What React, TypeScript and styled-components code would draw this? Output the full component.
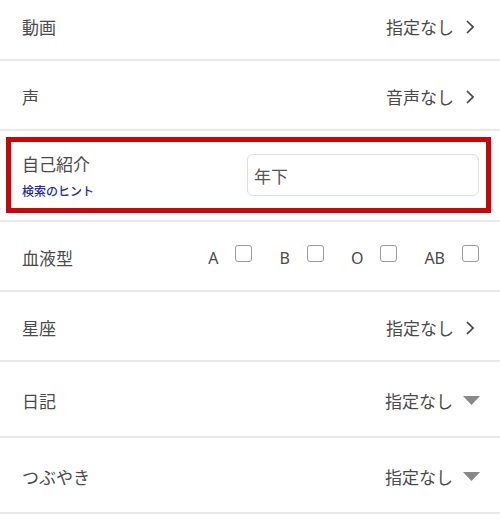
import styled, { createGlobalStyle } from "styled-components";

const GlobalStyle = createGlobalStyle`
  html, body {
    margin: 0;
    padding: 0;
    background: #fff;
  }
  body {
    font-family: "Noto Sans CJK JP", "Noto Sans", sans-serif;
    color: #4a4a4a;
    overflow: hidden;
  }
`;

// list is scrolled a little, first row partly hidden
const List = styled.div`
  width: 500px;
  margin-top: -9px;
`;

const Row = styled.div<{ $tall?: boolean }>`
  display: flex;
  align-items: center;
  justify-content: space-between;
  box-sizing: border-box;
  height: ${(p) => (p.$tall ? 76 : 70)}px;
  padding: 3px 20px 0 22px;
  border-bottom: 2px solid #e9e9e9;
`;

const HighlightRow = styled.div`
  box-sizing: border-box;
  height: 91px;
  padding: 6px 9px 7px 6px;
  border-bottom: 2px solid #e9e9e9;
`;

const RedBox = styled.div`
  box-sizing: border-box;
  height: 100%;
  border: 5px solid #c8060c;
  display: flex;
  align-items: center;
  justify-content: space-between;
  padding: 0 7px 0 11px;
`;

const Label = styled.span`
  font-size: 17px;
  line-height: 24px;
  color: #4a4a4a;
`;

const LabelStack = styled.div`
  display: flex;
  flex-direction: column;
  padding-top: 2px;
`;

const Hint = styled.span`
  margin-top: 6px;
  font-size: 12px;
  line-height: 18px;
  font-weight: 500;
  color: #1c2aa6;
`;

const Value = styled.div`
  display: flex;
  align-items: center;
  font-size: 17px;
  line-height: 24px;
  color: #4a4a4a;
`;

const ChevronIcon = styled.svg`
  margin-left: 12px;
  margin-right: 6px;
`;

const TriangleIcon = styled.svg`
  margin-left: 10px;
`;

const TextBox = styled.input`
  box-sizing: border-box;
  width: 232px;
  height: 42px;
  border: 1px solid #dedede;
  border-radius: 6px;
  padding: 1px 6px 0;
  font-family: "Noto Sans CJK JP", "Noto Sans", sans-serif;
  font-size: 17px;
  color: #555;
  outline: none;
  background: #fff;
`;

const Options = styled.div`
  display: flex;
  align-items: center;
  gap: 27px;
  padding-right: 1px;
`;

const Option = styled.label`
  display: flex;
  align-items: center;
  font-family: "Noto Sans", Roboto, sans-serif;
  font-size: 16px;
  color: #4a4a4a;
`;

const Box = styled.span`
  box-sizing: border-box;
  width: 17px;
  height: 17px;
  margin-left: 17px;
  margin-bottom: 9px;
  border: 1.5px solid #9a9a9a;
  border-radius: 3px;
  background: #fff;
`;

const Chevron = () => (
  <ChevronIcon width="8" height="14" viewBox="0 0 8 14">
    <polyline
      points="1,1 7,7 1,13"
      fill="none"
      stroke="#444"
      strokeWidth="1.7"
      strokeLinejoin="miter"
    />
  </ChevronIcon>
);

const Triangle = () => (
  <TriangleIcon width="17" height="9" viewBox="0 0 17 9">
    <polygon points="0,0 17,0 8.5,9" fill="#888" />
  </TriangleIcon>
);

const bloodTypes = ["A", "B", "O", "AB"];

export default function App() {
  return (
    <>
      <GlobalStyle />
      <List>
        <Row>
          <Label>動画</Label>
          <Value>
            指定なし
            <Chevron />
          </Value>
        </Row>
        <Row>
          <Label>声</Label>
          <Value>
            音声なし
            <Chevron />
          </Value>
        </Row>
        <HighlightRow>
          <RedBox>
            <LabelStack>
              <Label>自己紹介</Label>
              <Hint>検索のヒント</Hint>
            </LabelStack>
            <TextBox defaultValue="年下" />
          </RedBox>
        </HighlightRow>
        <Row>
          <Label>血液型</Label>
          <Options>
            {bloodTypes.map((t) => (
              <Option key={t}>
                {t}
                <Box />
              </Option>
            ))}
          </Options>
        </Row>
        <Row>
          <Label>星座</Label>
          <Value>
            指定なし
            <Chevron />
          </Value>
        </Row>
        <Row $tall>
          <Label>日記</Label>
          <Value>
            指定なし
            <Triangle />
          </Value>
        </Row>
        <Row $tall>
          <Label>つぶやき</Label>
          <Value>
            指定なし
            <Triangle />
          </Value>
        </Row>
      </List>
    </>
  );
}
